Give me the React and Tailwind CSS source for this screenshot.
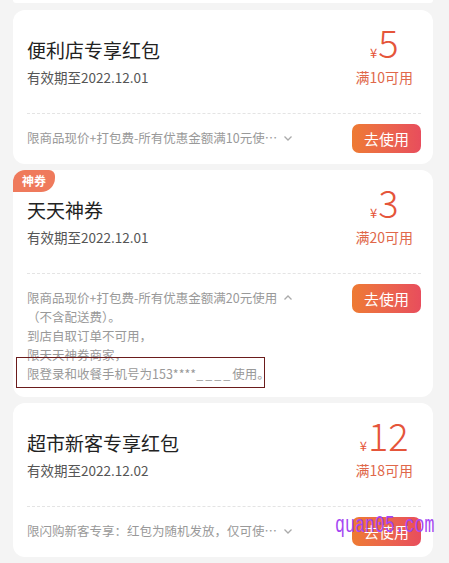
import React from 'react';

const font = { fontFamily: '"Noto Sans CJK SC", "Noto Sans", sans-serif' };

const Chevron = ({ up }) => (
  <svg width="10" height="10" viewBox="0 0 10 10" className="ml-[6px] shrink-0 text-[#aaa]">
    <path d={up ? 'M1.5 6.5 L5 3 L8.5 6.5' : 'M1.5 3.5 L5 7 L8.5 3.5'} fill="none" stroke="currentColor" strokeWidth="1.3" />
  </svg>
);

const UseButton = () => (
  <button className="w-[69px] h-[29px] shrink-0 rounded-[7px] bg-gradient-to-r from-[#ee7a32] to-[#e84d5c] text-white text-[15px] leading-[29px]">
    去使用
  </button>
);

const Card = ({ title, date, amount, limit, badge, children }) => (
  <div className="relative bg-white rounded-[12px] px-[14px] pr-[12px] pt-[26px] pb-[11px]">
    {badge && (
      <div className="absolute left-0 top-0 h-[22px] w-[42px] rounded-tl-[12px] rounded-br-[14px] rounded-tr-[6px] bg-[#ef7a5c] text-white text-[12px] font-bold leading-[22px] text-center">
        {badge}
      </div>
    )}
    <div className="flex justify-between">
      <div>
        <div className="text-[19px] leading-[28px] text-[#222]">{title}</div>
        <div className="mt-[3px] text-[13.5px] leading-[20px] text-[#555]">{date}</div>
      </div>
      <div className="flex flex-col items-center pr-[8px] -mt-[16px]">
        <div className="flex items-baseline text-[#e5553a]">
          <span className="text-[13px] mr-[1px]">¥</span>
          <span className="text-[38px] leading-[44px] font-light">{amount}</span>
        </div>
        <div className="mt-[3px] text-[14px] leading-[20px] text-[#e0684a]">{limit}</div>
      </div>
    </div>
    <div className="mt-[26px] border-t border-dashed border-[#e4e4e4]" />
    <div className="mt-[10px] flex justify-between items-start">{children}</div>
  </div>
);

export default function App() {
  return (
    <div className="w-[449px] h-[563px] overflow-hidden bg-[#f4f4f4] px-[13px] pr-[16px]" style={font}>
      <div className="h-[3px] bg-white rounded-b-[12px]" />
      <div className="mt-[7px]">
        <Card title="便利店专享红包" date="有效期至2022.12.01" amount="5" limit="满10可用">
          <div className="flex items-center mt-[4px] text-[12.5px] leading-[19px] text-[#999]">
            <span>限商品现价+打包费-所有优惠金额满10元使…</span>
            <Chevron />
          </div>
          <UseButton />
        </Card>
      </div>
      <div className="mt-[6px]">
        <Card title="天天神券" date="有效期至2022.12.01" amount="3" limit="满20可用" badge="神券">
          <div className="mt-[4px] pb-[3px] text-[12.5px] leading-[19px] text-[#999]">
            <div className="flex items-center">
              <span>限商品现价+打包费-所有优惠金额满20元使用</span>
              <Chevron up />
            </div>
            <div>（不含配送费）。</div>
            <div>到店自取订单不可用，</div>
            <div>限天天神券商家，</div>
            <div className="relative">
              限登录和收餐手机号为153****<span className="tracking-[2px]">____</span>使用。
              <div className="absolute -left-[11px] -top-[7px] w-[249px] h-[31px] border border-[#6b1c1c]" />
            </div>
          </div>
          <UseButton />
        </Card>
      </div>
      <div className="mt-[6px]">
        <Card title="超市新客专享红包" date="有效期至2022.12.02" amount="12" limit="满18可用">
          <div className="flex items-center mt-[4px] text-[12.5px] leading-[19px] text-[#999]">
            <span>限闪购新客专享：红包为随机发放，仅可使…</span>
            <Chevron />
          </div>
          <div className="relative">
            <UseButton />
            <div
              className="absolute -left-[17px] -top-[6px] text-[23px] leading-[30px] text-[#a445f2] scale-x-[0.72] origin-left whitespace-nowrap"
              style={{ fontFamily: '"Liberation Mono", monospace' }}
            >
              quan05.com
            </div>
          </div>
        </Card>
      </div>
    </div>
  );
}
